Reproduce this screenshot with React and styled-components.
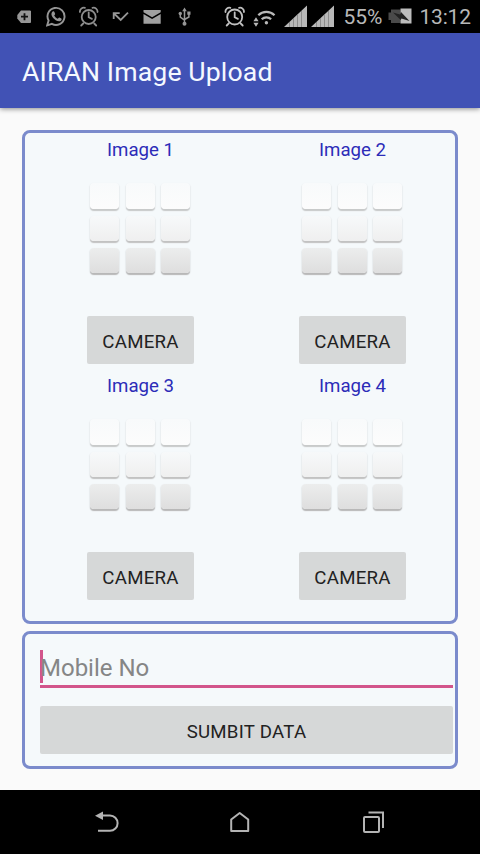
import React from 'react'
import styled, { createGlobalStyle } from 'styled-components';


const GlobalStyle = createGlobalStyle`
  * { box-sizing: border-box; }
  body { margin: 0; background: #fafafa; font-family: Roboto, sans-serif; }
`;

const Screen = styled.div`
  width: 480px;
  height: 854px;
  display: flex;
  flex-direction: column;
  background: #fafafa;
  overflow: hidden;
`;
const StatusBar = styled.div`
  height: 33px;
  flex: none;
  display: flex;
  background: #000;
`;
const Icon = styled.svg`
  flex: none;
  display: block;
  width: ${p => p.$w}px;
  height: ${p => p.$h || 33}px;
  margin-left: ${p => p.$ml}px;
  color: ${p => p.$color || '#b4b4b4'};
`;
const StatusText = styled.span`
  flex: none;
  width: ${p => p.$w}px;
  margin-left: ${p => p.$ml}px;
  font-size: 21px;
  line-height: 35px;
  letter-spacing: ${p => p.$ls || 0}px;
  white-space: nowrap;
  color: #b8b8b8;
`;
const AppBar = styled.header`
  height: 75px;
  flex: none;
  padding-left: 22px;
  background: #4152b5;
  box-shadow: 0 1px 5px rgba(0, 0, 0, 0.45);
`;
const Title = styled.h1`
  margin: 0;
  font-size: 26.67px;
  font-weight: 400;
  line-height: 79px;
  letter-spacing: 0.12px;
  color: #f4f8ff;
`;
const Content = styled.main`
  flex: 1;
  padding: 22px 22px 0;
  display: flex;
  flex-direction: column;
  gap: 7px;
`;
const Panel = styled.section`
  border: 3px solid #7b8bcc;
  border-radius: 8px;
  background: #f5f9fb;
`;
const ImagePanel = styled(Panel)`
  height: 494px;
  padding-left: 9.5px;
  display: grid;
  grid-template-columns: 212px 212px;
  grid-auto-rows: 236px;
`;
const FormPanel = styled(Panel)`
  height: 138px;
  padding: 16px 2px 0 15px;
`;
const Cell = styled.div`
  display: flex;
  flex-direction: column;
  align-items: center;
`;
const Label = styled.div`
  height: 22px;
  margin-top: 6px;
  font-size: 18.67px;
  line-height: 22px;
  color: #2c2cb8;
`;
const Tiles = styled.div`
  width: 101px;
  height: 91px;
  margin: 22px 0 42px;
  display: grid;
  grid-template-columns: repeat(3, 29px);
  grid-template-rows: 26px 25px 25px;
  column-gap: 6.5px;
  row-gap: 7px;
`;
const Tile = styled.div`
  border-radius: 4px;
  background: linear-gradient(${p => p.$from}, ${p => p.$to});
  box-shadow: 0 1.5px 1px ${p => p.$edge}, 0 1px 2px rgba(0, 0, 0, 0.1);
`;
const Button = styled.button`
  width: ${p => p.$wide ? '100%' : '107px'};
  height: 48px;
  padding: 0;
  border: 0;
  border-radius: 2px;
  background: #d6d8d8;
  font-family: inherit;
  font-size: 18.67px;
  line-height: 50px;
  padding-top: 1px;
  letter-spacing: 0.25px;
  color: #222;
`;
const Field = styled.div`
  height: 38px;
  margin-bottom: 18px;
  display: flex;
  border-bottom: 3px solid #d2558b;
`;
const Cursor = styled.i`
  width: 3px;
  height: 33px;
  flex: none;
  background: #d2558b;
`;
const Hint = styled.span`
  margin-left: -3px;
  font-size: 24px;
  line-height: 37px;
  color: #858686;
`;
const NavBar = styled.nav`
  height: 64px;
  flex: none;
  display: flex;
  background: #000;
`;

const rows = [
  { from: '#f8fafb', to: '#fcfcfc', edge: '#c8caca' },
  { from: '#f7f9fa', to: '#efefef', edge: '#c2c2c2' },
  { from: '#eceded', to: '#dedede', edge: '#b8b8b8' },
];

const Alarm = ({ cx, r }) => (
  <g fill="none" stroke="currentColor" strokeWidth="1.8" strokeLinecap="round">
    <circle cx={cx} cy="17" r={r} />
    <path d={`M${cx} 12.5v4.8l3.2 1.6`} />
    <path d={`M${cx - r - 1.8} 12a4 4 0 0 1 5-4.2M${cx + r + 1.8} 12a4 4 0 0 0-5-4.2`} />
    <path d={`M${cx - r + 1.5} 23.5l-2 2M${cx + r - 1.5} 23.5l2 2`} />
  </g>
);

const Signal = ({ ml }) => (
  <Icon $w={23} $ml={ml} $color="#b8b8b8" viewBox="0 0 23 33">
    <path fill="currentColor" d="M0 27L23 5.5V27z" />
    <path stroke="#808080" strokeWidth="0.8" d="M5.5 22v5M9.5 18v9M13.5 14.5v12.5M17.5 11v16" />
  </Icon>
);

const ImageCell = ({ name }) => {
  return (
    <Cell>
      <Label>{name}</Label>
      <Tiles>
        {rows.map((r) => [0, 1, 2].map((c) => (
          <Tile key={r.to + c} $from={r.from} $to={r.to} $edge={r.edge} />
        )))}
      </Tiles>
      <Button>CAMERA</Button>
    </Cell>
  )
}

const App = () => {
  return (
    <Screen>
      <GlobalStyle />
      <StatusBar>
        <Icon $w={14} $ml={17} $color="#969696" viewBox="17 0 14 33">
          <path fill="currentColor" d="M21 10.5h9a1.2 1.2 0 0 1 1.2 1.2v10a1.2 1.2 0 0 1-1.2 1.2h-9L17.3 18.5v-3.6z" />
          <path stroke="#111" strokeWidth="1.8" d="M24.5 13.2v7M21 16.7h7" />
        </Icon>
        <Icon $w={20} $ml={15} $color="#969696" viewBox="46 0 20 33">
          <path fill="none" stroke="currentColor" strokeWidth="1.9" d="M47.2 25.3l1.4-4.8a8.5 8.5 0 1 1 3.3 3.3z" />
          <path fill="currentColor" d="M52.4 11.8c1-.9 1.7-.5 2 .3l.7 1.7c.2.6-.6 1.2-.9 1.6.8 1.6 2 2.7 3.6 3.4.5-.4 1-1.4 1.6-1.2l1.9.9c.7.4.3 1.6-.4 2.2-1.3 1.1-3.5.6-5.2-.5-2-1.3-3.4-2.9-4-4.6-.5-1.4-.2-2.9.7-3.8z" />
        </Icon>
        <Icon $w={20} $ml={12.5} $color="#8d8d8d" viewBox="78.5 0 20 33">
          <Alarm cx={88.2} r={7} />
        </Icon>
        <Icon $w={17} $ml={13} $color="#969696" viewBox="111.5 0 17 33">
          <path fill="none" stroke="currentColor" strokeWidth="1.8" d="M113.2 19v-5.8h6M113.5 13.5l6.7 6.5 7.3-7.4" />
        </Icon>
        <Icon $w={18} $ml={14.5} $color="#a0a0a0" viewBox="143 0 18 33">
          <path fill="currentColor" d="M143.5 10h17.2v2.2l-8.6 5-8.6-5zM143.5 14l8.6 5 8.6-5v9.8h-17.2z" />
        </Icon>
        <Icon $w={14} $ml={17} $color="#969696" viewBox="178 0 14 33">
          <path fill="none" stroke="currentColor" strokeWidth="1.5" d="M184.5 10v14M180.3 14v3.2l4.2 3M188.9 13.5v3.5l-4.4 2.5" />
          <path fill="currentColor" d="M184.5 7.5l2.3 3.7h-4.6zM187.3 11.5h3.2v3.2h-3.2z" />
          <circle cx="180.3" cy="13.5" r="1.7" fill="currentColor" />
          <circle cx="184.5" cy="23.7" r="2" fill="currentColor" />
        </Icon>
        <Icon $w={22} $ml={31.5} $color="#c0c0c0" viewBox="223.5 0 22 33">
          <Alarm cx={234.2} r={7.5} />
        </Icon>
        <Icon $w={23} $ml={7} $color="#b8b8b8" viewBox="252.5 0 23 33">
          <path fill="currentColor" d="M255.5 17.2l2.6 4h-5.2zM255.5 26.8l2.6-4h-5.2z" />
          <path fill="none" stroke="currentColor" strokeWidth="2.2" d="M257.8 15.3a11.5 11.5 0 0 1 16.2 0M261.2 19.3a6.6 6.6 0 0 1 9.4 0" />
          <circle cx="265.9" cy="22.8" r="1.7" fill="currentColor" />
        </Icon>
        <Signal ml={8.5} />
        <Signal ml={4} />
        <StatusText $w={40} $ml={9.5} $ls={-0.1}>55%</StatusText>
        <Icon $w={24} $ml={4} viewBox="387.5 0 24 33">
          <path fill="#4a4a4a" d="M388 12.5h2.5V9.5H400v13.5h-9.5V20H388z" />
          <path fill="#bdbdbd" d="M400 8.5h11v15h-11z" />
          <path fill="#222" d="M392.5 12.5l7 2 1-2.5 8.5 9-8-2.5-.8 1.5z" />
        </Icon>
        <StatusText $w={54} $ml={8} $ls={-0.2}>13:12</StatusText>
      </StatusBar>

      <AppBar>
        <Title>AIRAN Image Upload</Title>
      </AppBar>

      <Content>
        <ImagePanel>
          <ImageCell name="Image 1" />
          <ImageCell name="Image 2" />
          <ImageCell name="Image 3" />
          <ImageCell name="Image 4" />
        </ImagePanel>
        <FormPanel>
          <Field>
            <Cursor />
            <Hint>Mobile No</Hint>
          </Field>
          <Button $wide>SUMBIT DATA</Button>
        </FormPanel>
      </Content>

      <NavBar>
        <Icon $w={26} $h={64} $ml={94} viewBox="94 790 26 64">
          <path fill="currentColor" d="M95 815.8l8-4.2v8.4z" />
          <path fill="none" stroke="currentColor" strokeWidth="2" d="M101 815.6h9a7.5 7.5 0 0 1 0 15.2H98" />
        </Icon>
        <Icon $w={22} $h={64} $ml={109} viewBox="229 790 22 64">
          <path fill="none" stroke="currentColor" strokeWidth="2" strokeLinejoin="round" d="M231.2 819.5l8.5-6.5 8.5 6.5v11.5h-17z" />
        </Icon>
        <Icon $w={24} $h={64} $ml={110.5} viewBox="361.5 790 24 64">
          <rect x="363.5" y="817" width="15" height="15" rx="1" fill="none" stroke="currentColor" strokeWidth="2" />
          <path fill="none" stroke="currentColor" strokeWidth="2" d="M368 812.6h14.5V828" />
        </Icon>
      </NavBar>
    </Screen>
  )
}

export default App
